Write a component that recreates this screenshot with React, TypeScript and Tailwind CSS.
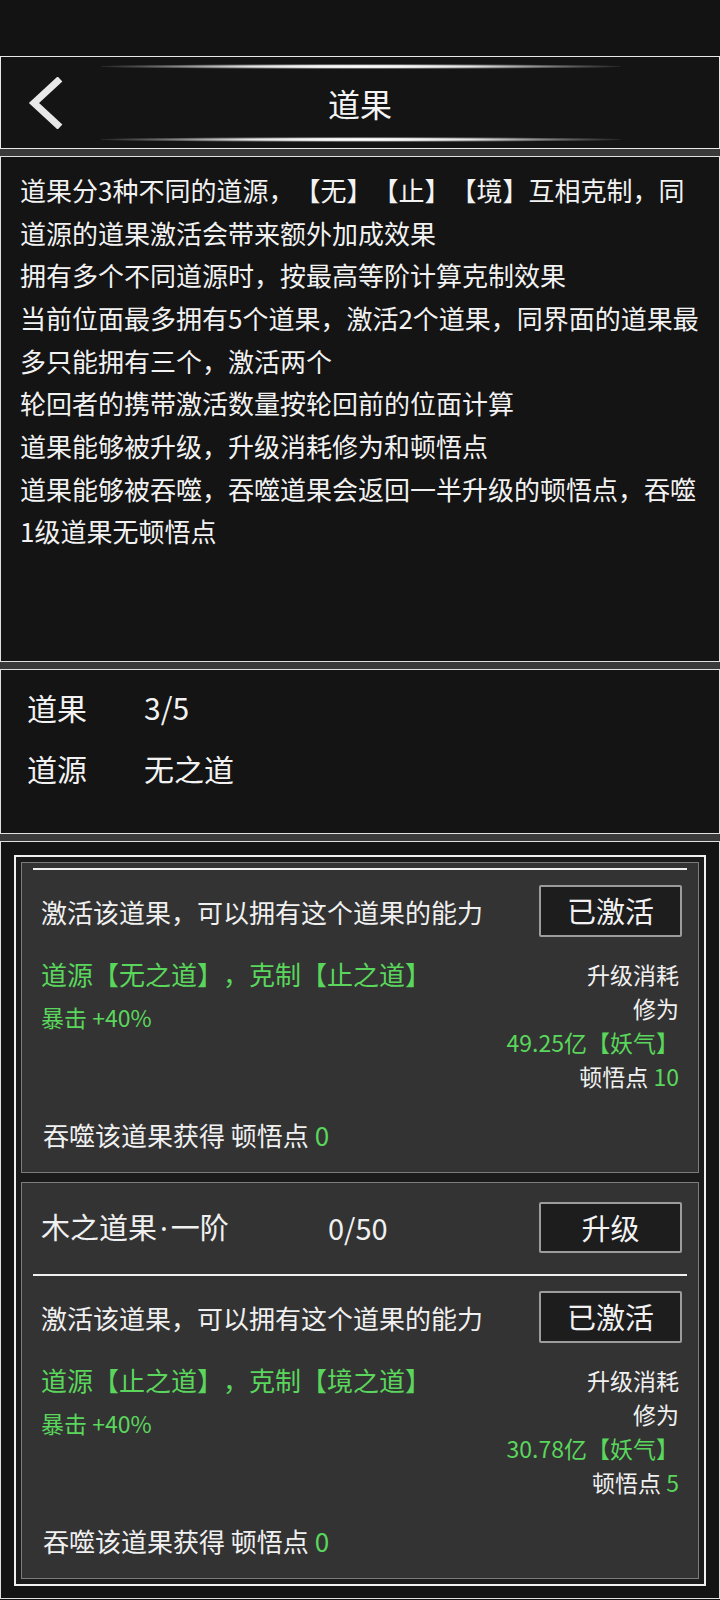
const FONT = "font-['Noto_Sans_CJK_SC','Noto_Sans',sans-serif]";

const introLines = [
  '道果分3种不同的道源，【无】【止】【境】互相克制，同',
  '道源的道果激活会带来额外加成效果',
  '拥有多个不同道源时，按最高等阶计算克制效果',
  '当前位面最多拥有5个道果，激活2个道果，同界面的道果最',
  '多只能拥有三个，激活两个',
  '轮回者的携带激活数量按轮回前的位面计算',
  '道果能够被升级，升级消耗修为和顿悟点',
  '道果能够被吞噬，吞噬道果会返回一半升级的顿悟点，吞噬',
  '1级道果无顿悟点',
];

type Fruit = {
  source: string;
  counter: string;
  cost: string;
  points: number;
};

function Glow() {
  return (
    <div className="ml-[100px] h-[5px] w-[519px] bg-[radial-gradient(ellipse_at_center,#ffffff_0%,#e6e6e6_30%,rgba(255,255,255,0.25)_60%,transparent_75%)]" />
  );
}

function Button({ label }: { label: string }) {
  return (
    <div className="flex h-full w-[143px] items-center justify-center rounded-[2px] border-2 border-[#9c9c9c] bg-[#1d1d1d] text-[29px] text-[#f2f2f2]">
      {label}
    </div>
  );
}

function FruitBody({ fruit }: { fruit: Fruit }) {
  return (
    <>
      <div className="mx-[11px] h-[2px] bg-[#f0f0f0]" />
      <div className="mt-[15px] flex h-[52px] items-center justify-between pl-[19px] pr-[16px]">
        <span className="text-[26px] text-[#f0f0f0]">激活该道果，可以拥有这个道果的能力</span>
        <Button label="已激活" />
      </div>
      <div className="mt-[20px] flex justify-between pl-[19px] pr-[19px]">
        <div className="text-[#5ad65c]">
          <div className="text-[26px] leading-[34px]">
            道源【{fruit.source}】，克制【{fruit.counter}】
          </div>
          <div className="mt-[9px] text-[23px] leading-[34px]">暴击 +40%</div>
        </div>
        <div className="text-right text-[23px] leading-[34px] text-[#f0f0f0]">
          <div>升级消耗</div>
          <div>修为</div>
          <div className="text-[#5ad65c]">{fruit.cost}【妖气】</div>
          <div>
            顿悟点 <span className="text-[#5ad65c]">{fruit.points}</span>
          </div>
        </div>
      </div>
      <div className="mt-[25px] pl-[21px] text-[26px] leading-[34px] text-[#f0f0f0]">
        吞噬该道果获得 顿悟点 <span className="text-[#5ad65c]">0</span>
      </div>
    </>
  );
}

export default function App() {
  return (
    <div className={`h-[1600px] w-[720px] overflow-hidden bg-[#131313] [text-spacing-trim:space-all] ${FONT}`}>
      <div className="h-[56px]" />

      {/* header */}
      <header className="h-[93px] border border-[#e8e8e8] bg-[#141414]">
        <div className="mt-[7px]">
          <Glow />
        </div>
        <div className="flex h-[68px] items-center">
          <div className="w-[100px] pl-[27px]">
            <svg width="36" height="52" viewBox="0 0 36 52">
              <polyline
                points="32,2 6,26 32,50"
                fill="none"
                stroke="#e8e8e8"
                strokeWidth="7"
                strokeLinejoin="miter"
              />
            </svg>
          </div>
          <div className="flex-1 pr-[100px] text-center text-[32px] text-[#f4f4f4]">道果</div>
        </div>
        <Glow />
      </header>
      <div className="h-[7px] bg-[#3a3a3a]" />

      {/* rules */}
      <section className="h-[506px] border border-[#e0e0e0] bg-[#141414] pl-[19px] pt-[12px] text-[26px] leading-[42.67px] text-[#f2f2f2]">
        {introLines.map((line) => (
          <div key={line} className="whitespace-nowrap">
            {line}
          </div>
        ))}
      </section>
      <div className="h-[7px] bg-[#3a3a3a]" />

      {/* stats */}
      <section className="h-[165px] border border-[#e0e0e0] bg-[#141414] pl-[26px] pt-[7px] text-[30px] leading-[61px] text-[#f2f2f2]">
        <div className="flex">
          <span className="w-[117px]">道果</span>
          <span>3/5</span>
        </div>
        <div className="flex">
          <span className="w-[117px]">道源</span>
          <span>无之道</span>
        </div>
      </section>
      <div className="h-[7px] bg-[#3a3a3a]" />

      {/* fruit list */}
      <section className="h-[758px] border border-[#e0e0e0] bg-[#141414] px-[13px] pb-[12px] pt-[13px]">
        <div className="border-2 border-[#f0f0f0] bg-[#1b1b1b] p-[5px]">
          <div className="border border-[#7c7c7c] bg-[#333333] pb-[20px] pt-[5px]">
            <FruitBody fruit={{ source: '无之道', counter: '止之道', cost: '49.25亿', points: 10 }} />
          </div>

          <div className="mt-[9px] border border-[#7c7c7c] bg-[#333333] pb-[20px] pt-[19px]">
            <div className="flex h-[51px] items-center pl-[19px] pr-[16px] text-[29px] text-[#f0f0f0]">
              <span className="w-[287px]">
                木之道果<span className="px-[3px] font-['Noto_Sans',sans-serif]">·</span>一阶
              </span>
              <span className="flex-1">0/50</span>
              <Button label="升级" />
            </div>
            <div className="mt-[21px]">
              <FruitBody fruit={{ source: '止之道', counter: '境之道', cost: '30.78亿', points: 5 }} />
            </div>
          </div>
        </div>
      </section>
    </div>
  );
}
